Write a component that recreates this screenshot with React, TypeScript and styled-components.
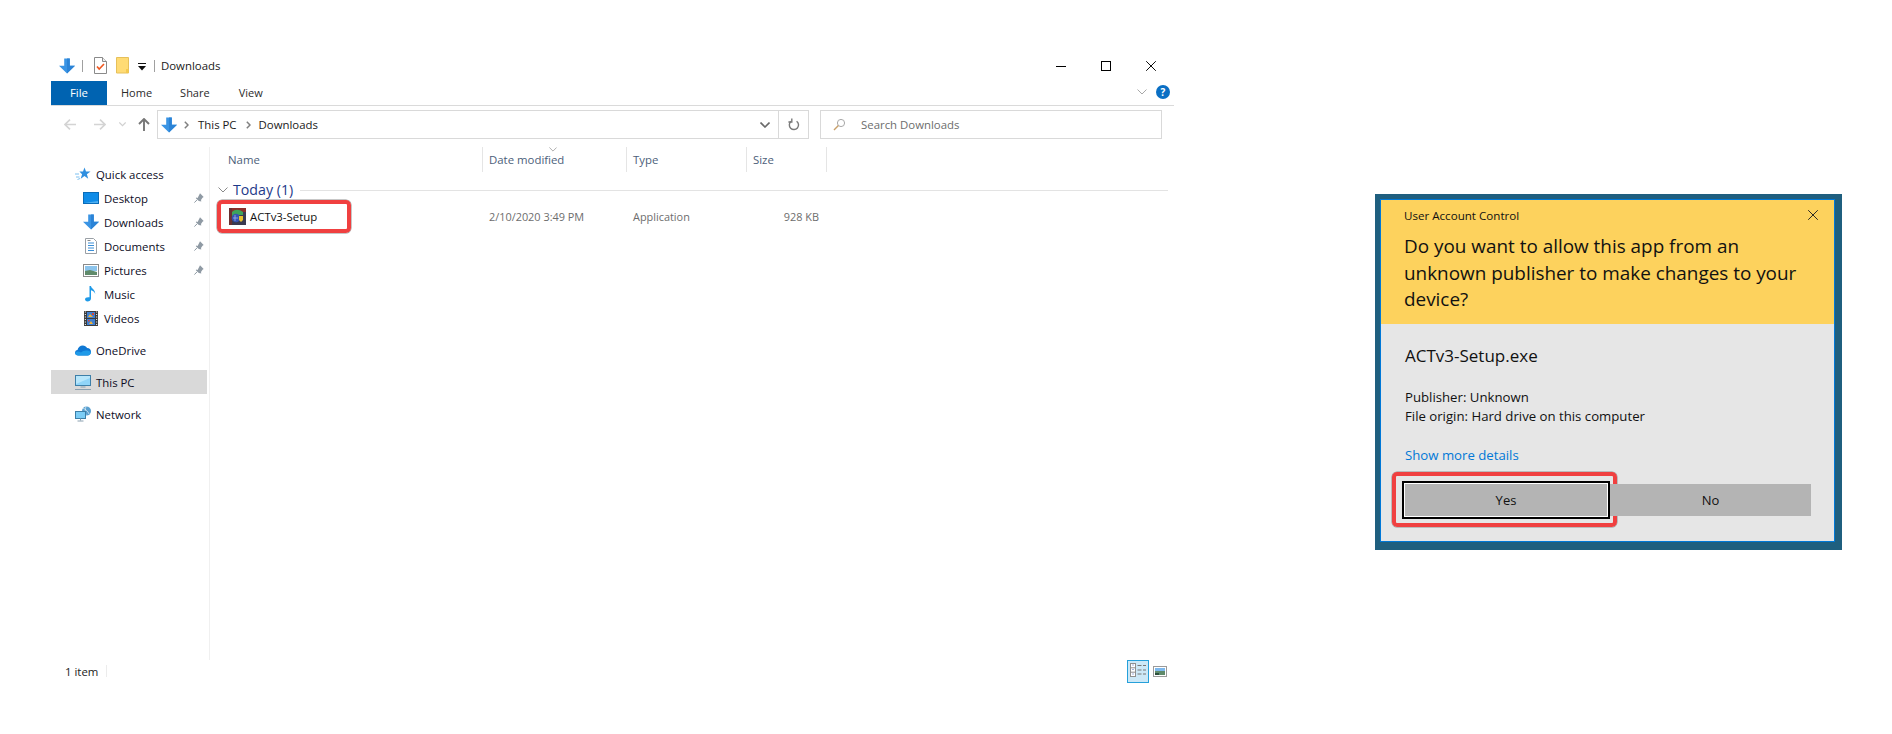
import styled, { createGlobalStyle } from "styled-components";

const GlobalStyle = createGlobalStyle`
  html, body {
    margin: 0;
    padding: 0;
    background: #fff;
  }
  body {
    font-family: "Open Sans", "Noto Sans", "Liberation Sans", sans-serif;
    color: #000;
  }
  * {
    box-sizing: border-box;
  }
`;

const Page = styled.div`
  display: flex;
  align-items: flex-start;
  width: 1892px;
  height: 734px;
  overflow: hidden;
`;

const Explorer = styled.div`
  display: flex;
  flex-direction: column;
  width: 1123px;
  height: 630px;
  margin: 52px 0 0 51px;
  font-size: 11.4px;
`;

const TitleBar = styled.div`
  display: flex;
  align-items: center;
  height: 29px;
  padding: 0 0 2px 8px;
`;

const TitleSep = styled.span`
  width: 1px;
  height: 12px;
  background: #a0a0a0;
  margin: 0 ${(props: { $right: number; $left: number }) => props.$right}px 0
    ${(props: { $right: number; $left: number }) => props.$left}px;
`;

const TitleText = styled.span`
  color: #1a1a1a;
`;

const WindowControls = styled.div`
  display: flex;
  align-items: center;
  gap: 35px;
  margin-left: auto;
  padding-right: 18px;
`;

const Ribbon = styled.div`
  display: flex;
  align-items: flex-start;
  height: 25px;
  border-bottom: 1px solid #dadada;
`;

const FileTab = styled.div`
  display: flex;
  align-items: center;
  justify-content: center;
  width: 56px;
  height: 24px;
  padding-bottom: 2px;
  background: #0063b1;
  color: #fff;
`;

const RibbonTab = styled.div`
  display: flex;
  align-items: center;
  height: 22px;
  margin-left: ${(props: { $left: number }) => props.$left}px;
  font-size: 11px;
  color: #2b2b2b;
`;

const RibbonEnd = styled.div`
  display: flex;
  align-items: center;
  gap: 9px;
  height: 22px;
  margin-left: auto;
  padding-right: 4px;
`;

const HelpBadge = styled.span`
  display: flex;
  align-items: center;
  justify-content: center;
  width: 14px;
  height: 14px;
  border-radius: 50%;
  background: #0a6fc4;
  color: #fff;
  font-size: 10px;
  font-weight: 700;
`;

const NavBar = styled.div`
  display: flex;
  align-items: center;
  height: 29px;
  margin-top: 4px;
  padding-left: 13px;
`;

const NavSlot = styled.span`
  display: flex;
  margin-left: ${(props: { $left: number }) => props.$left}px;
`;

const AddressBar = styled.div`
  display: flex;
  align-items: center;
  width: 652px;
  height: 29px;
  margin-left: 7px;
  padding-left: 3px;
  border: 1px solid #d9d9d9;
  color: #1a1a1a;
`;

const Crumb = styled.span`
  margin-left: ${(props: { $left: number }) => props.$left}px;
`;

const CrumbChevron = styled.span`
  display: flex;
  margin-left: ${(props: { $left: number }) => props.$left}px;
`;

const AddressEnd = styled.div`
  display: flex;
  align-items: center;
  height: 100%;
  margin-left: auto;
`;

const RefreshCell = styled.div`
  display: flex;
  align-items: center;
  justify-content: center;
  width: 30px;
  height: 100%;
  margin-left: 8px;
  border-left: 1px solid #d9d9d9;
`;

const SearchBox = styled.div`
  display: flex;
  align-items: center;
  gap: 15px;
  width: 342px;
  height: 29px;
  margin-left: 11px;
  padding-left: 12px;
  border: 1px solid #d9d9d9;
  color: #6d6d6d;
`;

const Main = styled.div`
  display: flex;
  flex: 1;
  margin-top: 8px;
`;

const Sidebar = styled.nav`
  width: 159px;
  padding-top: 15px;
  border-right: 1px solid #f0f0f0;
`;

const NavGroup = styled.div`
  margin-bottom: 8px;
`;

const NavRow = styled.div<{ $indent: number; $selected?: boolean }>`
  display: flex;
  align-items: center;
  width: 156px;
  height: 24px;
  padding-left: ${(props) => props.$indent}px;
  background: ${(props) => (props.$selected ? "#d9d9d9" : "transparent")};
  color: #0c0c1e;
`;

const NavIcon = styled.span`
  display: flex;
  justify-content: center;
  width: 16px;
  margin-right: 5px;
`;

const PinSlot = styled.span`
  display: flex;
  margin-left: auto;
  margin-right: 3px;
`;

const Content = styled.div`
  flex: 1;
`;

const ColumnGrid = styled.div`
  display: grid;
  grid-template-columns: 273px 144px 120px 80px;
`;

const HeaderCell = styled.div<{ $pad: number; $edge?: boolean }>`
  position: relative;
  display: flex;
  align-items: center;
  height: 25px;
  padding-left: ${(props) => props.$pad}px;
  border-right: 1px solid #e5e5e5;
  color: #4c607a;
`;

const SortMark = styled.span`
  position: absolute;
  top: 0;
  left: 66px;
  display: flex;
`;

const GroupRow = styled.div`
  display: flex;
  align-items: center;
  height: 19px;
  margin: 8px 0 1px;
  padding-left: 8px;
`;

const GroupLabel = styled.span`
  margin-left: 5px;
  color: #1e3a8a;
  font-size: 14.2px;
`;

const GroupLine = styled.span`
  flex: 1;
  height: 1px;
  margin: 1px 6px 0 7px;
  background: #e3e3e3;
`;

const FileName = styled.div`
  display: flex;
  align-items: center;
  gap: 4px;
  width: 134px;
  height: 33px;
  margin-left: 7px;
  padding-left: 8px;
  border: 4px solid #f04040;
  border-radius: 5px;
  box-shadow: 0 0 0 0.5px #8f8f8f;
  color: #111;
`;

const FileCell = styled.div<{ $pad?: number; $right?: boolean }>`
  display: flex;
  align-items: center;
  justify-content: ${(props) => (props.$right ? "flex-end" : "flex-start")};
  padding-left: ${(props) => props.$pad ?? 0}px;
  padding-right: ${(props) => (props.$right ? 8 : 0)}px;
  font-size: 10.9px;
  color: #6d6d6d;
`;

const StatusBar = styled.div`
  display: flex;
  align-items: center;
  height: 22px;
  padding-left: 14px;
  color: #222;
`;

const StatusSep = styled.span`
  width: 1px;
  height: 12px;
  margin-left: 8px;
  background: #ececec;
`;

const ViewSwitch = styled.div`
  display: flex;
  align-items: center;
  gap: 4px;
  margin-left: auto;
  padding-right: 7px;
`;

const ViewActive = styled.span`
  display: flex;
  align-items: center;
  justify-content: center;
  width: 22px;
  height: 23px;
  background: #cce8f7;
  border: 1px solid #26a0da;
`;

const Dialog = styled.div`
  width: 467px;
  height: 356px;
  margin: 194px 0 0 201px;
  background: #1f5f7f;
  padding: 5px 7px 8px 5px;
  font-size: 12px;
`;

const DialogFrame = styled.div`
  display: flex;
  flex-direction: column;
  height: 100%;
  border: 1px solid #0078d7;
  background: #e6e6e6;
`;

const DialogHeader = styled.div`
  height: 124px;
  padding: 0 16px 0 23px;
  background: #fdd25d;
  color: #111;
`;

const DialogTop = styled.div`
  display: flex;
  align-items: center;
  justify-content: space-between;
  height: 30px;
  font-size: 11.6px;
`;

const Question = styled.div`
  font-size: 18.9px;
  line-height: 26.5px;
  margin-top: 3px;
`;

const DialogBody = styled.div`
  flex: 1;
  padding: 20px 0 0 24px;
  color: #111;
`;

const AppName = styled.div`
  font-size: 17px;
  line-height: 24px;
`;

const Facts = styled.div`
  margin-top: 20px;
  font-size: 13.2px;
  line-height: 19px;
`;

const MoreLink = styled.div`
  margin-top: 20px;
  font-size: 13.2px;
  line-height: 19px;
  color: #0078d7;
`;

const ButtonRow = styled.div`
  display: flex;
  gap: 3px;
  margin-top: 19px;
`;

const DialogButton = styled.div<{ $focused?: boolean }>`
  position: relative;
  display: flex;
  align-items: center;
  justify-content: center;
  width: ${(props) => (props.$focused ? 202 : 201)}px;
  height: 32px;
  background: #b4b4b4;
  font-size: 13px;
  color: #111;
  box-shadow: ${(props) => (props.$focused ? "0 0 0 1px #fff, 0 0 0 3px #000" : "none")};
`;

const Highlight = styled.span`
  position: absolute;
  top: -12px;
  left: -13px;
  right: -10px;
  bottom: -11px;
  border: 4.5px solid #f04040;
  border-radius: 5px;
  box-shadow: 0 0 0 0.5px #8f8f8f;
`;

const DownArrow = ({ size = 16 }: { size?: number }) => (
  <svg width={size} height={size} viewBox="0 0 16 16">
    <path d="M5.2 0.5h5.6v7.2H16L8 15.5 0 7.7h5.2z" fill="#3a94e4" />
    <path d="M8 0.5h2.8v7.2H16L8 15.5z" fill="#2b83d6" />
  </svg>
);

const DocCheckIcon = () => (
  <svg width="13" height="17" viewBox="0 0 13 17" style={{ margin: "0 9px 0 0" }}>
    <path d="M.5.5h8l4 4v12H.5z" fill="#fff" stroke="#8a8a8a" />
    <path d="M8.5.5v4h4" fill="#eee" stroke="#8a8a8a" />
    <path d="M3 9.5l2.2 2.5L10 7" fill="none" stroke="#f0561e" strokeWidth="1.6" />
  </svg>
);

const FolderIcon = () => (
  <svg width="13" height="17" viewBox="0 0 13 17">
    <path d="M.5.5h12v15.5H.5z" fill="#ffdb74" stroke="#e6c05a" />
    <path d="M10 12h2.5v4H10z" fill="#f4c94e" />
  </svg>
);

const DropMark = () => (
  <svg width="8" height="8" viewBox="0 0 8 8" style={{ margin: "2px 0 0 9px" }}>
    <path d="M0 .5h8" stroke="#111" />
    <path d="M0 3h8L4 7.5z" fill="#111" />
  </svg>
);

const Chevron = ({ size = 10, color = "#8a8a8a", width = 1 }: { size?: number; color?: string; width?: number }) => (
  <svg width={size} height={size / 2 + 1} viewBox="0 0 10 6">
    <path d="M.5.5L5 5 9.5.5" fill="none" stroke={color} strokeWidth={width} />
  </svg>
);

const CrumbArrow = () => (
  <svg width="5" height="8" viewBox="0 0 5 8">
    <path d="M.8.8L4 4 .8 7.2" fill="none" stroke="#808080" strokeWidth="1.5" />
  </svg>
);

const NavArrow = ({ flip, color }: { flip?: boolean; color: string }) => (
  <svg width="12" height="11" viewBox="0 0 12 11" style={{ transform: flip ? "scaleX(-1)" : "none" }}>
    <path d="M6 .7L1 5.5l5 4.8M1 5.5h11" fill="none" stroke={color} strokeWidth="1.7" />
  </svg>
);

const UpArrow = () => (
  <svg width="12" height="13" viewBox="0 0 12 13">
    <path d="M1 6l5-5 5 5M6 1v12" fill="none" stroke="#777" strokeWidth="1.9" />
  </svg>
);

const RefreshIcon = () => (
  <svg width="12" height="13" viewBox="0 0 12 13">
    <path d="M8.6 3.2A4.6 4.6 0 1 1 3 3.4" fill="none" stroke="#7a7a7a" strokeWidth="1.4" />
    <path d="M3.4.4v3.6H0" fill="none" stroke="#7a7a7a" strokeWidth="1.4" transform="translate(0.4 0)" />
  </svg>
);

const SearchIcon = () => (
  <svg width="13" height="13" viewBox="0 0 13 13">
    <circle cx="8" cy="5" r="3.6" fill="none" stroke="#a8a8a8" />
    <path d="M5.4 7.6L1 12" stroke="#c9a06a" strokeWidth="1.4" />
  </svg>
);

const PinIcon = () => (
  <svg width="10" height="10" viewBox="0 0 10 10">
    <path d="M6 .3l3.7 3.7-1.2.7-1.5 2.2.3 1.6L4.8 8 2.6 5.9 1.900 5.200 2 4.500l1.600.4L5.400 1.600z" fill="#8f9aa4" />
    <path d="M3 6.900L.4 9.600" stroke="#8f9aa4" />
  </svg>
);

const StarIcon = () => (
  <svg width="16" height="14" viewBox="0 0 16 14">
    <path d="M9.500.5l1.500 4h4.500l-3.600 2.700 1.300 4.500-3.700-2.700-3.800 2.800 1.400-4.600L4.400 4.500h3.600z" fill="#2f8fe0" />
    <path d="M0 7h4M1 10h3.500M2.500 12.500l2.500-1" stroke="#7cc0f0" />
  </svg>
);

const DesktopIcon = () => (
  <svg width="16" height="12" viewBox="0 0 16 12">
    <rect x=".5" y=".5" width="15" height="11" fill="#0f8ce8" stroke="#0a6cb8" />
    <path d="M1 11h14V9z" fill="#4fb0f2" />
  </svg>
);

const DocumentIcon = () => (
  <svg width="12" height="16" viewBox="0 0 12 16">
    <path d="M.5.5h8l3 3v12H.5z" fill="#fff" stroke="#9aa0a6" />
    <path d="M3 5h6M3 7.500h6M3 10h6M3 12.500h6" stroke="#3a8fd8" />
    <path d="M2.500 2.500h3" stroke="#888" />
  </svg>
);

const PictureIcon = () => (
  <svg width="16" height="13" viewBox="0 0 16 13">
    <rect x=".5" y=".5" width="15" height="12" fill="#fff" stroke="#8a8a8a" />
    <rect x="2" y="2" width="12" height="5" fill="#8cc4ec" />
    <path d="M2 7l5-1 7 2v3H2z" fill="#5f8a6a" />
  </svg>
);

const MusicIcon = () => (
  <svg width="12" height="16" viewBox="0 0 12 16">
    <path d="M4.500 0h1.500c.3 2.500 4.500 3.500 4.200 8-.6-2-2.300-3.300-4.200-3.700v8.200c0 2-1.800 3-3.500 3C1 15.500 0 14.500 0 13.300c0-1.500 2-2.500 4.500-2z" fill="#1f9ae8" />
  </svg>
);

const VideoIcon = () => (
  <svg width="14" height="15" viewBox="0 0 14 15">
    <rect width="14" height="15" fill="#3c3c3c" />
    <path d="M.8 1h1.200M.8 3.500h1.200M.8 6h1.200M.8 8.500h1.200M.8 11h1.200M.8 13.500h1.200M12 1h1.200M12 3.500h1.200M12 6h1.200M12 8.500h1.200M12 11h1.200M12 13.500h1.200" stroke="#ddd" />
    <rect x="3" y="1" width="8" height="6" fill="#3f7fd0" />
    <rect x="3" y="8" width="8" height="6" fill="#3f7fd0" />
    <path d="M4 6l2-3 1 1 1 1 1 1zM5 13l2-3 2 3z" fill="#f2b33a" />
    <path d="M8 2h2v2H8zM4 9h1.500v1.500H4z" fill="#d8483c" />
  </svg>
);

const CloudIcon = () => (
  <svg width="16" height="11" viewBox="0 0 16 11">
    <path d="M3.400 10.500C1.400 10.500 0 9.300 0 7.700c0-1.500 1.100-2.500 2.500-2.700C3 2.400 5.200.5 7.800.5c1.900 0 3.400.9 4.300 2.400 2.300 0 3.900 1.700 3.900 3.900 0 2.100-1.500 3.700-3.500 3.700z" fill="#0f78d4" />
    <path d="M3.400 10.500C1.400 10.500 0 9.300 0 7.700 2 6 4 6.500 6 7.500c2-1.500 5-3 10-.7 0 2.100-1.500 3.700-3.500 3.700z" fill="#1f9ae8" />
  </svg>
);

const MonitorIcon = () => (
  <svg width="16" height="15" viewBox="0 0 16 15">
    <rect x=".5" y=".5" width="15" height="10" fill="#8fd4f8" stroke="#3d7fa8" />
    <path d="M1 1h14v2L1 9z" fill="#b7e6fb" />
    <path d="M5.500 12h5" stroke="#8aa0b0" />
    <path d="M0 14.500h16" stroke="#8aa0b0" />
  </svg>
);

const NetworkIcon = () => (
  <svg width="16" height="16" viewBox="0 0 16 16">
    <circle cx="11.500" cy="5" r="4.500" fill="#5aa0d0" />
    <path d="M8 2c2 1 5 3 6 6M11 .5c-1 2-1 6 0 9" stroke="#e8f2f8" strokeWidth=".7" fill="none" />
    <rect x=".5" y="5.500" width="10" height="7" fill="#7ccdf6" stroke="#3d7fa8" />
    <path d="M5.500 12.500v2M2.500 15h6" stroke="#8aa0b0" />
  </svg>
);

const AppIcon = () => (
  <svg width="17" height="17" viewBox="0 0 17 17">
    <rect width="17" height="17" fill="#3a3a50" />
    <rect width="17" height="4" fill="#8a2f2a" />
    <path d="M0 0h3v17H0z" fill="#6a3030" />
    <path d="M3 4c3-3 7-3 11 0v3H7L3 9z" fill="#3ea35a" />
    <circle cx="7" cy="10" r="4.300" fill="#3752b0" />
    <path d="M10 8h4v4l-2 2-2-2z" fill="#e8c22c" />
    <path d="M6 7v6M4 10h5" stroke="#9fb4e8" strokeWidth=".8" />
  </svg>
);

const ClosePath = ({ size, color = "#000" }: { size: number; color?: string }) => (
  <svg width={size} height={size} viewBox="0 0 10 10">
    <path d="M.2.2l9.600 9.600M9.800.2L.2 9.800" stroke={color} strokeWidth=".95" fill="none" />
  </svg>
);

const DetailsIcon = () => (
  <svg width="16" height="16" viewBox="0 0 16 16">
    <rect x=".5" y=".5" width="5" height="13" fill="#fff" stroke="#8f8f8f" />
    <path d="M1 4.800h4M1 9.200h4" stroke="#8f8f8f" />
    <path d="M2.500 2h1M2.500 6.500h1M2.500 11h1" stroke="#4060c0" />
    <path d="M7.500 2.500h4M13 2.500h3M7.500 7h4M13 7h3M7.500 11h4M13 11h3" stroke="#777" />
  </svg>
);

const LargeIconsIcon = () => (
  <svg width="14" height="11" viewBox="0 0 14 11">
    <rect x=".5" y=".5" width="13" height="10" fill="#fff" stroke="#9a9a9a" />
    <rect x="2" y="2" width="10" height="3" fill="#7cb8ee" />
    <path d="M2 5h10v4H2z" fill="#5f8a6a" />
    <path d="M2 7h4v2H2z" fill="#2c4f3c" />
  </svg>
);

const navGroups = [
  [
    { label: "Quick access", icon: <StarIcon />, indent: 24 },
    { label: "Desktop", icon: <DesktopIcon />, indent: 32, pin: true },
    { label: "Downloads", icon: <DownArrow />, indent: 32, pin: true },
    { label: "Documents", icon: <DocumentIcon />, indent: 32, pin: true },
    { label: "Pictures", icon: <PictureIcon />, indent: 32, pin: true },
    { label: "Music", icon: <MusicIcon />, indent: 32 },
    { label: "Videos", icon: <VideoIcon />, indent: 32 },
  ],
  [{ label: "OneDrive", icon: <CloudIcon />, indent: 24 }],
  [{ label: "This PC", icon: <MonitorIcon />, indent: 24, selected: true }],
  [{ label: "Network", icon: <NetworkIcon />, indent: 24 }],
];

const App = (): JSX.Element => {
  return (
    <Page>
      <GlobalStyle />
      <Explorer>
        <TitleBar>
          <DownArrow />
          <TitleSep $left={7} $right={11} />
          <DocCheckIcon />
          <FolderIcon />
          <DropMark />
          <TitleSep $left={8} $right={6} />
          <TitleText>Downloads</TitleText>
          <WindowControls>
            <svg width="10" height="10" viewBox="0 0 10 10">
              <path d="M0 5.500h10" stroke="#000" />
            </svg>
            <svg width="10" height="10" viewBox="0 0 10 10">
              <rect x=".5" y=".5" width="9" height="9" fill="none" stroke="#000" />
            </svg>
            <ClosePath size={10} />
          </WindowControls>
        </TitleBar>
        <Ribbon>
          <FileTab>File</FileTab>
          <RibbonTab $left={14}>Home</RibbonTab>
          <RibbonTab $left={28}>Share</RibbonTab>
          <RibbonTab $left={29}>View</RibbonTab>
          <RibbonEnd>
            <Chevron color="#a8a8a8" />
            <HelpBadge>?</HelpBadge>
          </RibbonEnd>
        </Ribbon>
        <NavBar>
          <NavArrow color="#d4d4d4" />
          <NavSlot $left={18}>
            <NavArrow flip color="#d4d4d4" />
          </NavSlot>
          <NavSlot $left={13}>
            <Chevron size={7} color="#d0d0d0" width={1.6} />
          </NavSlot>
          <NavSlot $left={12}>
            <UpArrow />
          </NavSlot>
          <AddressBar>
            <DownArrow />
            <CrumbChevron $left={7}>
              <CrumbArrow />
            </CrumbChevron>
            <Crumb $left={9}>This PC</Crumb>
            <CrumbChevron $left={9}>
              <CrumbArrow />
            </CrumbChevron>
            <Crumb $left={8}>Downloads</Crumb>
            <AddressEnd>
              <Chevron color="#6a6a6a" width={1.6} />
              <RefreshCell>
                <RefreshIcon />
              </RefreshCell>
            </AddressEnd>
          </AddressBar>
          <SearchBox>
            <SearchIcon />
            Search Downloads
          </SearchBox>
        </NavBar>
        <Main>
          <Sidebar>
            {navGroups.map((group) => (
              <NavGroup key={group[0].label}>
                {group.map((item) => (
                  <NavRow key={item.label} $indent={item.indent} $selected={item.selected}>
                    <NavIcon>{item.icon}</NavIcon>
                    {item.label}
                    {item.pin && (
                      <PinSlot>
                        <PinIcon />
                      </PinSlot>
                    )}
                  </NavRow>
                ))}
              </NavGroup>
            ))}
          </Sidebar>
          <Content>
            <ColumnGrid>
              <HeaderCell $pad={18}>Name</HeaderCell>
              <HeaderCell $pad={6}>
                <SortMark>
                  <Chevron size={8} color="#9a9a9a" />
                </SortMark>
                Date modified
              </HeaderCell>
              <HeaderCell $pad={6}>Type</HeaderCell>
              <HeaderCell $pad={6}>Size</HeaderCell>
            </ColumnGrid>
            <GroupRow>
              <Chevron color="#8a8a8a" />
              <GroupLabel>Today (1)</GroupLabel>
              <GroupLine />
            </GroupRow>
            <ColumnGrid>
              <FileName>
                <AppIcon />
                ACTv3-Setup
              </FileName>
              <FileCell $pad={6}>2/10/2020 3:49 PM</FileCell>
              <FileCell $pad={6}>Application</FileCell>
              <FileCell $right>928 KB</FileCell>
            </ColumnGrid>
          </Content>
        </Main>
        <StatusBar>
          1 item
          <StatusSep />
          <ViewSwitch>
            <ViewActive>
              <DetailsIcon />
            </ViewActive>
            <LargeIconsIcon />
          </ViewSwitch>
        </StatusBar>
      </Explorer>
      <Dialog>
        <DialogFrame>
          <DialogHeader>
            <DialogTop>
              User Account Control
              <ClosePath size={10} color="#222" />
            </DialogTop>
            <Question>
              Do you want to allow this app from an
              <br />
              unknown publisher to make changes to your
              <br />
              device?
            </Question>
          </DialogHeader>
          <DialogBody>
            <AppName>ACTv3-Setup.exe</AppName>
            <Facts>
              Publisher: Unknown
              <br />
              File origin: Hard drive on this computer
            </Facts>
            <MoreLink>Show more details</MoreLink>
            <ButtonRow>
              <DialogButton $focused>
                Yes
                <Highlight />
              </DialogButton>
              <DialogButton>No</DialogButton>
            </ButtonRow>
          </DialogBody>
        </DialogFrame>
      </Dialog>
    </Page>
  );
};

export default App;
